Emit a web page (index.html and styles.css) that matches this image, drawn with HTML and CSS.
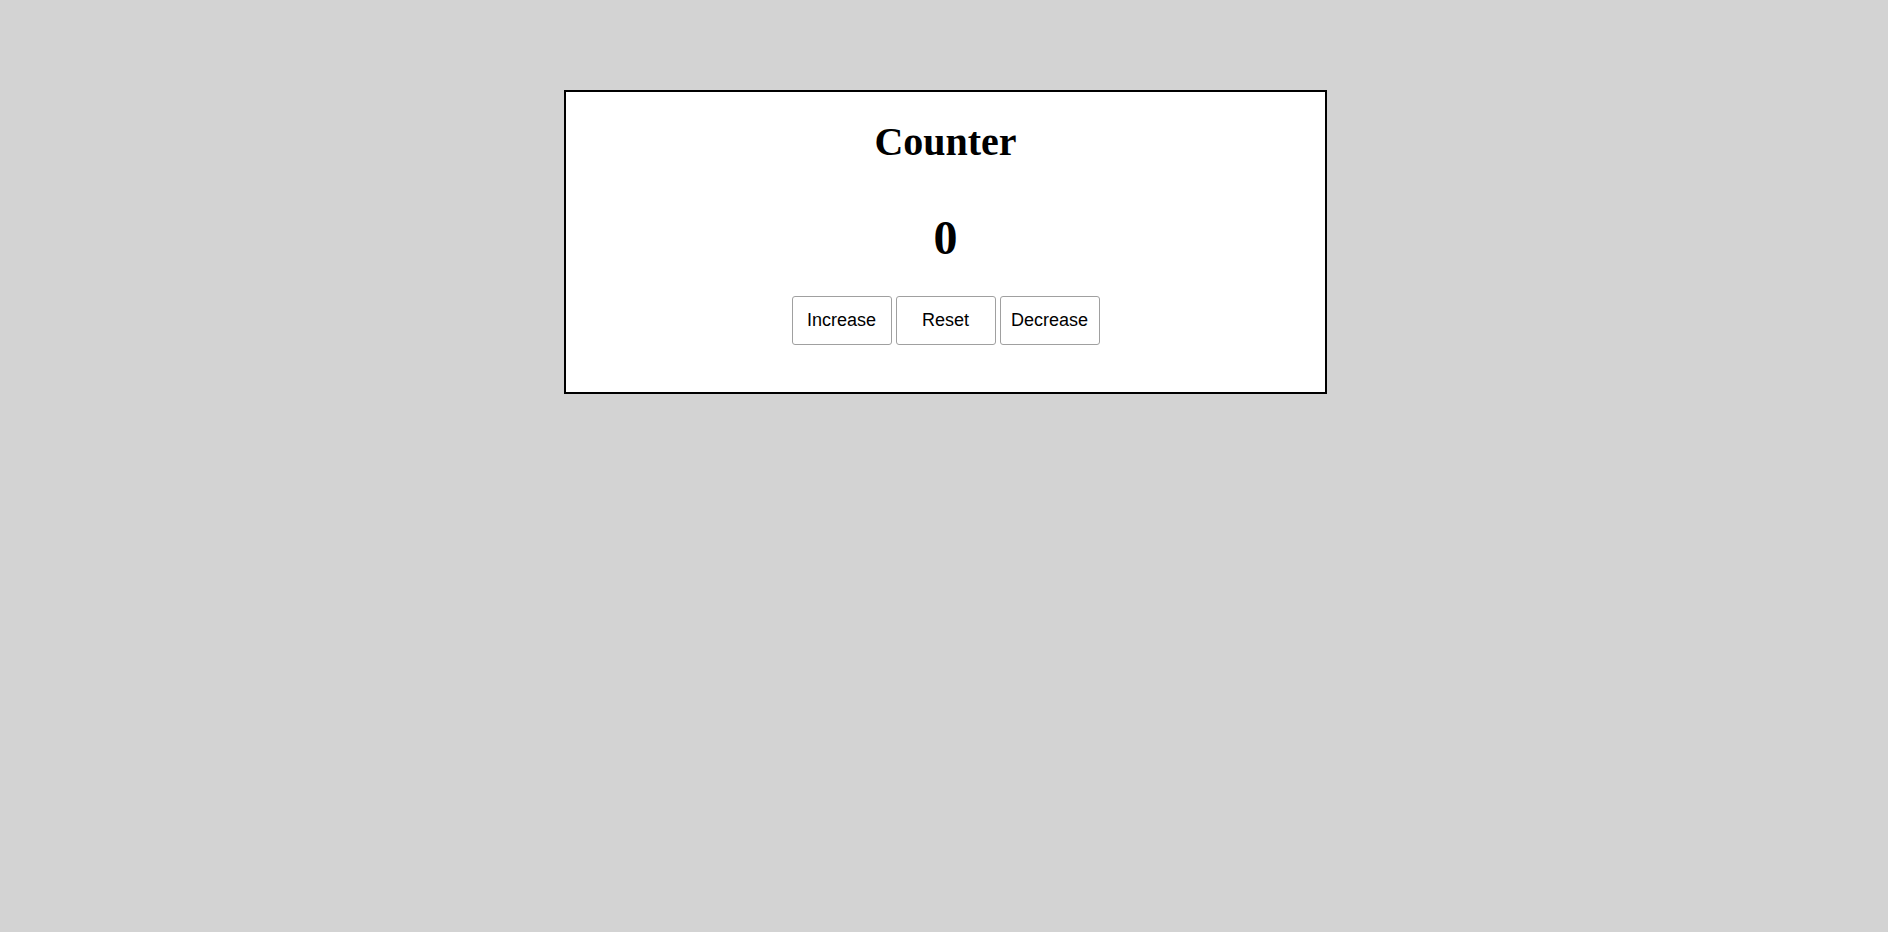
FILE: index.html
```html
<!DOCTYPE html>
<html lang="en">
<head>
<meta charset="utf-8">
<title>Counter</title>
<link rel="stylesheet" href="styles.css">
</head>
<body>
<main class="card">
  <h1 class="title">Counter</h1>
  <div class="count">0</div>
  <div class="actions">
    <button class="btn" type="button">Increase</button>
    <button class="btn" type="button">Reset</button>
    <button class="btn" type="button">Decrease</button>
  </div>
</main>
</body>
</html>
```

FILE: styles.css
```css
html, body {
  margin: 0;
  padding: 0;
}

body {
  background: #d3d3d3;
  padding: 90px 0 0 3px;
  font-family: "Liberation Serif", "Times New Roman", serif;
  color: #000;
}

.card {
  box-sizing: border-box;
  width: 763px;
  margin: 0 auto;
  border: 2px solid #000;
  background: #fff;
  padding: 28px 0 47px;
  text-align: center;
  display: flex;
  flex-direction: column;
  align-items: center;
}

.title {
  margin: 0;
  font-size: 40px;
  line-height: 44px;
  font-weight: bold;
}

.count {
  margin-top: 47px;
  font-size: 48px;
  line-height: 53px;
  font-weight: bold;
}

.actions {
  margin-top: 32px;
  display: flex;
  gap: 4px;
  justify-content: center;
}

.btn {
  box-sizing: border-box;
  width: 100px;
  height: 49px;
  padding: 0;
  background: #fff;
  border: 1px solid #a0a0a0;
  border-radius: 3px;
  font-family: "Liberation Sans", Arial, sans-serif;
  font-size: 18px;
  color: #000;
  cursor: pointer;
}
```
